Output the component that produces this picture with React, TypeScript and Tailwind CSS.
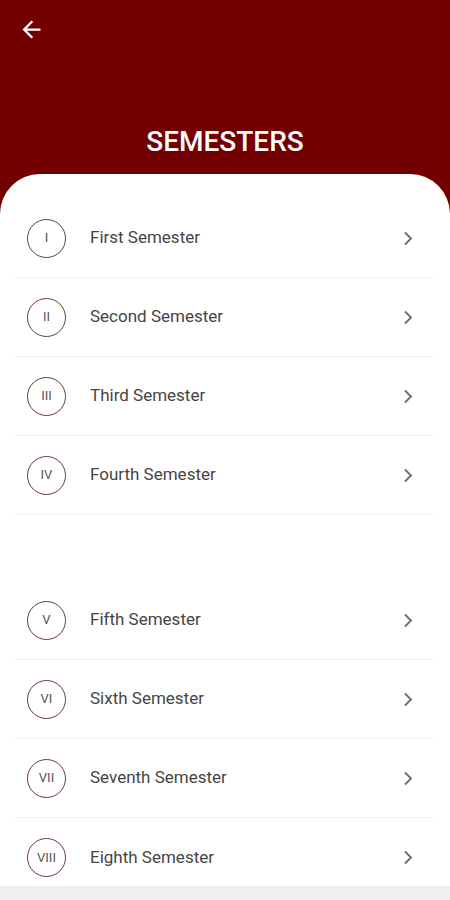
import React from "react";

const top = [
  { n: "I", label: "First Semester" },
  { n: "II", label: "Second Semester" },
  { n: "III", label: "Third Semester" },
  { n: "IV", label: "Fourth Semester" },
];
const bottom = [
  { n: "V", label: "Fifth Semester" },
  { n: "VI", label: "Sixth Semester" },
  { n: "VII", label: "Seventh Semester" },
  { n: "VIII", label: "Eighth Semester" },
];

function Row({ n, label, last }: { n: string; label: string; last?: boolean }) {
  return (
    <div
      className={`flex items-center h-[79px] pl-[12px] pr-[22px] ${
        last ? "" : "border-b border-[#f1f1f1]"
      }`}
    >
      <div className="w-[39px] h-[39px] rounded-full border-[1.5px] border-[#6e3b3b] flex items-center justify-center text-[13px] text-[#555555] shrink-0">
        {n}
      </div>
      <div className="ml-[24px] flex-1 text-[17px] text-[#454545]">{label}</div>
      <svg width="10" height="15" viewBox="0 0 10 15" className="shrink-0">
        <path d="M2 1.5 L8 7.5 L2 13.5" fill="none" stroke="#6b6b6b" strokeWidth="1.8" />
      </svg>
    </div>
  );
}

export default function App() {
  return (
    <div
      className="relative w-[450px] h-[900px] overflow-hidden bg-white"
      style={{ fontFamily: "Roboto, 'Noto Sans', sans-serif" }}
    >
      <div className="bg-[#730000] h-[214px] flex flex-col">
        <div className="pt-[16px] pl-[18px]">
          <svg width="27" height="27" viewBox="0 0 24 24">
            <path
              d="M20 11H7.83l5.59-5.59L12 4l-8 8 8 8 1.41-1.41L7.83 13H20v-2z"
              fill="#ffffff"
            />
          </svg>
        </div>
        <div className="mt-[83px] text-center text-white text-[28px] font-medium leading-[32px]">
          SEMESTERS
        </div>
      </div>
      <div className="-mt-[40px] bg-white rounded-t-[40px] pt-[25px] px-[15px]">
        {top.map((r) => (
          <Row key={r.n} n={r.n} label={r.label} />
        ))}
        <div className="h-[66px]" />
        {bottom.map((r, i) => (
          <Row key={r.n} n={r.n} label={r.label} last={i === bottom.length - 1} />
        ))}
      </div>
      <div className="absolute left-0 right-0 bottom-0 h-[14px] bg-[#efefef]" />
    </div>
  );
}
